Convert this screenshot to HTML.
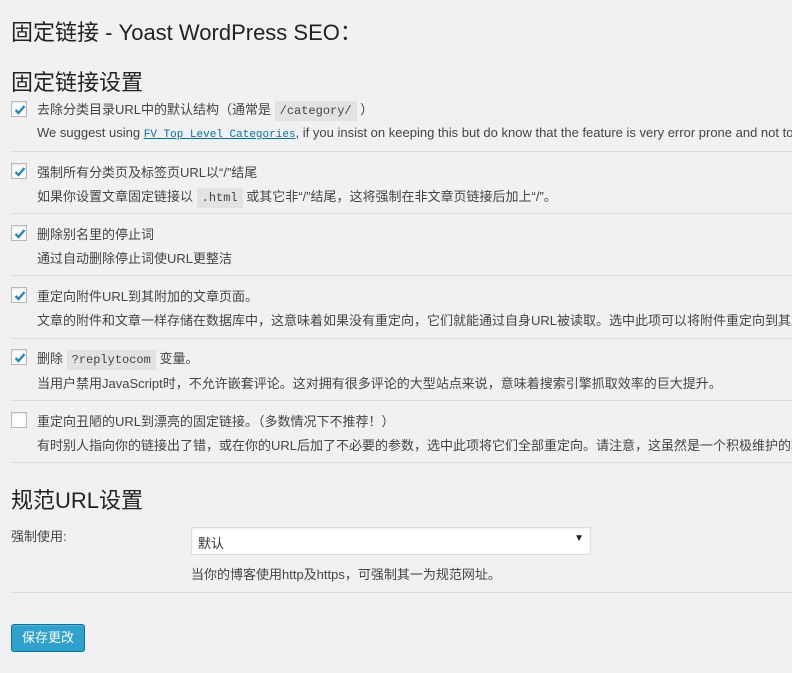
<!DOCTYPE html>
<html><head><meta charset="utf-8"><style>
body{margin:0;width:792px;height:673px;overflow:hidden;background:#f1f1f1;font-family:"Liberation Sans","Noto Sans CJK SC",sans-serif;color:#444;font-size:13px}
#w{position:relative;width:792px;height:673px;overflow:hidden}
.a{position:absolute;white-space:nowrap}
h1,h3{margin:0;font-weight:normal;color:#222}
.cb{position:absolute;left:11px;width:14px;height:14px;border:1px solid #b4b9be;background:#fff;box-shadow:inset 0 1px 2px rgba(0,0,0,.1)}
.cb svg{position:absolute;left:0;top:0}
.sep{position:absolute;left:11px;right:0;height:1px;background:#ddd}
code{font-family:"Liberation Mono",monospace;background:#e2e2e2;padding:3px 5px;font-size:12px}
a{color:#0073aa;font-family:"Liberation Mono",monospace;font-size:11px;text-decoration:underline}
</style></head><body><div id="w">
<h1 class="a" style="left:11px;top:15px;font-size:22px">固定链接 - Yoast WordPress SEO：</h1>
<h3 class="a" style="left:11px;top:65px;font-size:22px">固定链接设置</h3>

<div class="cb" style="top:101px"><svg width="16" height="16" viewBox="0 0 16 16"><path d="M3.5 8l3 3 6-7" stroke="#1e8cbe" stroke-width="2.4" fill="none"/></svg></div>
<div class="a" style="left:37px;top:99px">去除分类目录URL中的默认结构（通常是 <code>/category/</code> ）</div>
<div class="a" style="left:37px;top:125px">We suggest using <a>FV Top Level Categories</a>, if you insist on keeping this but do know that the feature is very error prone and not to be trusted.</div>
<div class="sep" style="top:151px"></div>

<div class="cb" style="top:163px"><svg width="16" height="16" viewBox="0 0 16 16"><path d="M3.5 8l3 3 6-7" stroke="#1e8cbe" stroke-width="2.4" fill="none"/></svg></div>
<div class="a" style="left:37px;top:162px">强制所有分类页及标签页URL以“/”结尾</div>
<div class="a" style="left:37px;top:186px">如果你设置文章固定链接以 <code>.html</code> 或其它非“/”结尾，这将强制在非文章页链接后加上“/”。</div>
<div class="sep" style="top:213px"></div>

<div class="cb" style="top:225px"><svg width="16" height="16" viewBox="0 0 16 16"><path d="M3.5 8l3 3 6-7" stroke="#1e8cbe" stroke-width="2.4" fill="none"/></svg></div>
<div class="a" style="left:37px;top:224px">删除别名里的停止词</div>
<div class="a" style="left:37px;top:248px">通过自动删除停止词使URL更整洁</div>
<div class="sep" style="top:275px"></div>

<div class="cb" style="top:287px"><svg width="16" height="16" viewBox="0 0 16 16"><path d="M3.5 8l3 3 6-7" stroke="#1e8cbe" stroke-width="2.4" fill="none"/></svg></div>
<div class="a" style="left:37px;top:286px">重定向附件URL到其附加的文章页面。</div>
<div class="a" style="left:37px;top:310px">文章的附件和文章一样存储在数据库中，这意味着如果没有重定向，它们就能通过自身URL被读取。选中此项可以将附件重定向到其所附加的文章。</div>
<div class="sep" style="top:338px"></div>

<div class="cb" style="top:349px"><svg width="16" height="16" viewBox="0 0 16 16"><path d="M3.5 8l3 3 6-7" stroke="#1e8cbe" stroke-width="2.4" fill="none"/></svg></div>
<div class="a" style="left:37px;top:348px">删除 <code>?replytocom</code> 变量。</div>
<div class="a" style="left:37px;top:373px">当用户禁用JavaScript时，不允许嵌套评论。这对拥有很多评论的大型站点来说，意味着搜索引擎抓取效率的巨大提升。</div>
<div class="sep" style="top:400px"></div>

<div class="cb" style="top:412px"></div>
<div class="a" style="left:37px;top:411px">重定向丑陋的URL到漂亮的固定链接。（多数情况下不推荐！）</div>
<div class="a" style="left:37px;top:435px">有时别人指向你的链接出了错，或在你的URL后加了不必要的参数，选中此项将它们全部重定向。请注意，这虽然是一个积极维护的功能。</div>
<div class="sep" style="top:462px"></div>

<h3 class="a" style="left:11px;top:483px;font-size:22px">规范URL设置</h3>
<div class="a" style="left:11px;top:526px">强制使用:</div>
<div class="a" style="left:191px;top:527px;width:398px;height:26px;background:#fff;border:1px solid #ddd;box-shadow:inset 0 1px 2px rgba(0,0,0,.07)"><span style="position:absolute;left:6px;top:5px;color:#333">默认</span><span style="position:absolute;right:6px;top:5px;font-size:10px;color:#222">▼</span></div>
<div class="a" style="left:191px;top:564px">当你的博客使用http及https，可强制其一为规范网址。</div>
<div class="sep" style="top:592px"></div>
<div class="a" style="left:11px;top:624px;width:72px;height:26px;background:#2ea2cc;border:1px solid #0074a2;border-radius:3px;color:#fff;text-align:center;line-height:26px;box-shadow:inset 0 1px 0 rgba(120,200,230,.5)">保存更改</div>
</div></body></html>
